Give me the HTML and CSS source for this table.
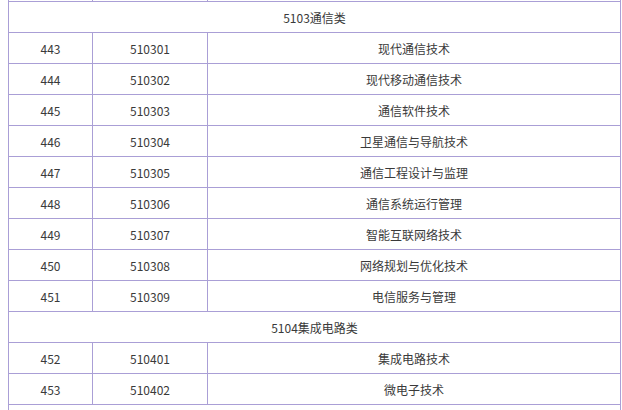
FILE: index.html
```html
<!DOCTYPE html>
<html lang="zh-CN">
<head>
<meta charset="utf-8">
<title>专业目录</title>
<link rel="stylesheet" href="styles.css">
</head>
<body>
<div class="page">
<table class="major-table">
  <colgroup>
    <col class="c-no">
    <col class="c-code">
    <col class="c-name">
  </colgroup>
  <tbody>
    <tr><td></td><td></td><td></td></tr>
    <tr class="cat"><td colspan="3">5103通信类</td></tr>
    <tr><td>443</td><td>510301</td><td>现代通信技术</td></tr>
    <tr><td>444</td><td>510302</td><td>现代移动通信技术</td></tr>
    <tr><td>445</td><td>510303</td><td>通信软件技术</td></tr>
    <tr><td>446</td><td>510304</td><td>卫星通信与导航技术</td></tr>
    <tr><td>447</td><td>510305</td><td>通信工程设计与监理</td></tr>
    <tr><td>448</td><td>510306</td><td>通信系统运行管理</td></tr>
    <tr><td>449</td><td>510307</td><td>智能互联网络技术</td></tr>
    <tr><td>450</td><td>510308</td><td>网络规划与优化技术</td></tr>
    <tr><td>451</td><td>510309</td><td>电信服务与管理</td></tr>
    <tr class="cat"><td colspan="3">5104集成电路类</td></tr>
    <tr><td>452</td><td>510401</td><td>集成电路技术</td></tr>
    <tr><td>453</td><td>510402</td><td>微电子技术</td></tr>
    <tr class="cat"><td colspan="3"></td></tr>
  </tbody>
</table>
</div>
</body>
</html>
```

FILE: styles.css
```css
html, body {
  margin: 0;
  padding: 0;
  background: #ffffff;
}

.page {
  padding-left: 8px;
  overflow: hidden;
  height: 410px;
}

.major-table {
  margin-top: -29px;
  width: 612px;
  border-collapse: collapse;
  table-layout: fixed;
  font-family: "Noto Sans CJK SC", "Microsoft YaHei", sans-serif;
  font-size: 12px;
  color: #3a3a3a;
}

.c-no { width: 84px; }
.c-code { width: 115px; }
.c-name { width: 413px; }

.major-table td {
  border: 1px solid #aa9fd6;
  height: 30px;
  padding: 2px 0 0 0;
  box-sizing: border-box;
  line-height: 28px;
  text-align: center;
  vertical-align: middle;
  white-space: nowrap;
}
```
